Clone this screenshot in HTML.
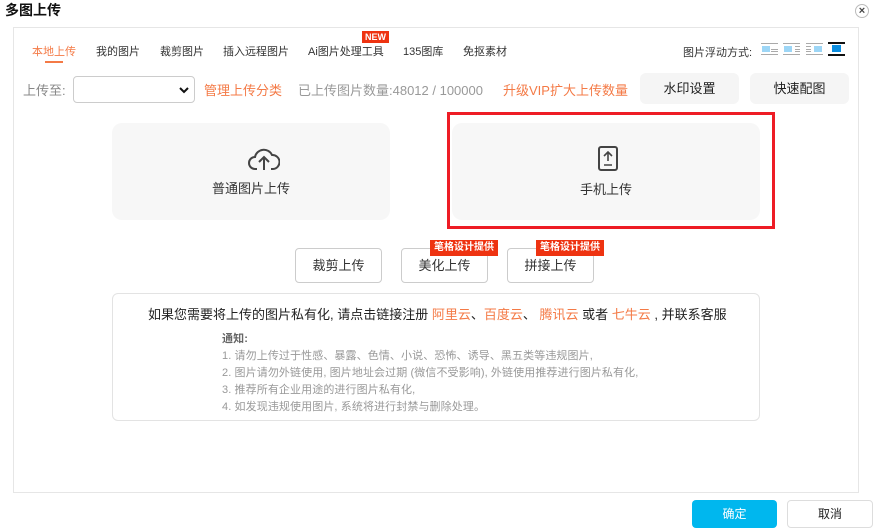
<!DOCTYPE html>
<html><head><meta charset="utf-8"><style>
*{margin:0;padding:0;box-sizing:border-box}
body{width:882px;height:526px;background:#fff;font-family:"Liberation Sans","Noto Sans CJK SC",sans-serif;position:relative;overflow:hidden;color:#333}
.a{position:absolute;white-space:nowrap}
.t{font-size:11px;color:#333;top:43px}
.btn{position:absolute;background:#f5f5f5;border-radius:6px;font-size:13px;color:#222;text-align:center}
.ob{position:absolute;border:1px solid #ccc;border-radius:4px;font-size:13px;color:#333;text-align:center;line-height:33px;width:87px;height:35px;top:248px;background:#fff}
.bd{position:absolute;background:#ee3311;color:#fff;font-size:10px;line-height:16px;padding:0 4px;top:240px;font-weight:bold}
.card{position:absolute;background:#f7f7f7;border-radius:10px;top:123px;height:97px;text-align:center;font-size:13px;color:#333}
.o{color:#f47a46}
.n{font-size:11px;color:#999;line-height:17px;letter-spacing:0.1px}
</style></head><body>
<div class="a" style="left:5px;top:0px;font-size:14px;font-weight:bold;color:#111">多图上传</div>
<div class="a" style="left:855px;top:4px;width:14px;height:14px;border:1px solid #bbb;border-radius:50%;font-size:11px;line-height:12px;text-align:center;font-weight:bold;color:#444">×</div>
<div class="a" style="left:13px;top:27px;width:846px;height:466px;border:1px solid #e6e6e6"></div>
<div class="a t" style="left:32px;color:#f47a46">本地上传</div>
<div class="a" style="left:45px;top:61px;width:18px;height:2px;background:#f47a46"></div>
<div class="a t" style="left:96px">我的图片</div>
<div class="a t" style="left:160px">裁剪图片</div>
<div class="a t" style="left:223px">插入远程图片</div>
<div class="a t" style="left:308px">Ai图片处理工具</div>
<div class="a" style="left:362px;top:31px;background:#ee3311;color:#fff;font-size:9px;font-weight:bold;line-height:12px;padding:0 3px">NEW</div>
<div class="a t" style="left:403px">135图库</div>
<div class="a t" style="left:463px">免抠素材</div>
<div class="a t" style="left:683px;top:44px">图片浮动方式:</div>
<svg class="a" style="left:761px;top:41px" width="90" height="17">
<g fill="#aaa"><rect x="0" y="2" width="17" height="1"/><rect x="0" y="13" width="17" height="1"/><rect x="10" y="8" width="7" height="1"/><rect x="10" y="10" width="7" height="1"/></g><rect x="1" y="5" width="8" height="6" fill="#9dd6f6"/>
<g fill="#aaa" transform="translate(22,0)"><rect x="0" y="2" width="17" height="1"/><rect x="0" y="13" width="17" height="1"/><rect x="12" y="5" width="5" height="1"/><rect x="12" y="8" width="5" height="1"/><rect x="12" y="10" width="5" height="1"/></g><rect x="23" y="5" width="8" height="6" fill="#9dd6f6"/>
<g fill="#aaa" transform="translate(45,0)"><rect x="0" y="2" width="17" height="1"/><rect x="0" y="13" width="17" height="1"/><rect x="0" y="5" width="5" height="1"/><rect x="0" y="8" width="5" height="1"/><rect x="0" y="10" width="5" height="1"/></g><rect x="53" y="5" width="8" height="6" fill="#9dd6f6"/>
<g fill="#111" transform="translate(67,0)"><rect x="0" y="1" width="17" height="2"/><rect x="0" y="13" width="17" height="2"/></g><rect x="71" y="4" width="9" height="7" fill="#0a8de0"/>
</svg>
<div class="a" style="left:23px;top:80px;font-size:13px;color:#888">上传至:</div>
<div class="a" style="left:73px;top:76px;width:122px;height:27px;border:1px solid #ccc;border-radius:4px"><svg style="position:absolute;right:5px;top:9px" width="10" height="8"><path d="M1 2l4 4 4-4" stroke="#111" stroke-width="2" fill="none"/></svg></div>
<div class="a o" style="left:204px;top:80px;font-size:13px">管理上传分类</div>
<div class="a" style="left:298px;top:80px;font-size:13px;color:#999">已上传图片数量:48012 / 100000</div>
<div class="a o" style="left:503px;top:80px;font-size:13px">升级VIP扩大上传数量</div>
<div class="btn" style="left:640px;top:73px;width:99px;height:31px;line-height:31px">水印设置</div>
<div class="btn" style="left:750px;top:73px;width:99px;height:31px;line-height:31px">快速配图</div>
<div class="card" style="left:112px;width:278px">
<svg style="position:absolute;left:136px;top:23px" width="32" height="26" viewBox="0 0 32 26"><path d="M9 23H7a6 6 0 0 1 0-12 9 9 0 0 1 17-2 7 7 0 0 1 1 14h-2" fill="none" stroke="#444" stroke-width="2"/><path d="M16 24V12M11 16l5-5 5 5" fill="none" stroke="#444" stroke-width="2"/></svg>
<div style="position:absolute;left:0;right:0;top:55px">普通图片上传</div></div>
<div class="a" style="left:447px;top:112px;width:328px;height:117px;border:3px solid #ee1c25"></div>
<div class="card" style="left:452px;width:308px">
<svg style="position:absolute;left:145px;top:23px" width="22" height="25" viewBox="0 0 22 25"><rect x="2" y="1" width="18" height="23" rx="2" fill="none" stroke="#444" stroke-width="2"/><path d="M11 15V6M7 10l4-4 4 4M7 19h8" fill="none" stroke="#444" stroke-width="1.6"/></svg>
<div style="position:absolute;left:0;right:0;top:56px">手机上传</div></div>
<div class="ob" style="left:295px">裁剪上传</div>
<div class="ob" style="left:401px">美化上传</div>
<div class="ob" style="left:507px">拼接上传</div>
<div class="bd" style="left:430px">笔格设计提供</div>
<div class="bd" style="left:536px">笔格设计提供</div>
<div class="a" style="left:112px;top:293px;width:648px;height:128px;border:1px solid #e3e3e3;border-radius:6px"></div>
<div class="a" style="left:148px;top:304px;font-size:13px;color:#222">如果您需要将上传的图片私有化, 请点击链接注册 <span class="o">阿里云</span>、<span class="o">百度云</span>、 <span class="o">腾讯云</span> 或者 <span class="o">七牛云</span> , 并联系客服</div>
<div class="a n" style="left:222px;top:331px;color:#666;font-weight:bold">通知:</div>
<div class="a n" style="left:222px;top:348px">1. 请勿上传过于性感、暴露、色情、小说、恐怖、诱导、黑五类等违规图片,</div>
<div class="a n" style="left:222px;top:365px">2. 图片请勿外链使用, 图片地址会过期 (微信不受影响), 外链使用推荐进行图片私有化,</div>
<div class="a n" style="left:222px;top:382px">3. 推荐所有企业用途的进行图片私有化,</div>
<div class="a n" style="left:222px;top:399px">4. 如发现违规使用图片, 系统将进行封禁与删除处理。</div>
<div class="a" style="left:692px;top:500px;width:85px;height:28px;background:#00b7ee;border-radius:4px;color:#fff;font-size:12px;text-align:center;line-height:28px">确定</div>
<div class="a" style="left:787px;top:500px;width:86px;height:28px;border:1px solid #ddd;border-radius:4px;color:#222;font-size:12px;text-align:center;line-height:26px">取消</div>
</body></html>
